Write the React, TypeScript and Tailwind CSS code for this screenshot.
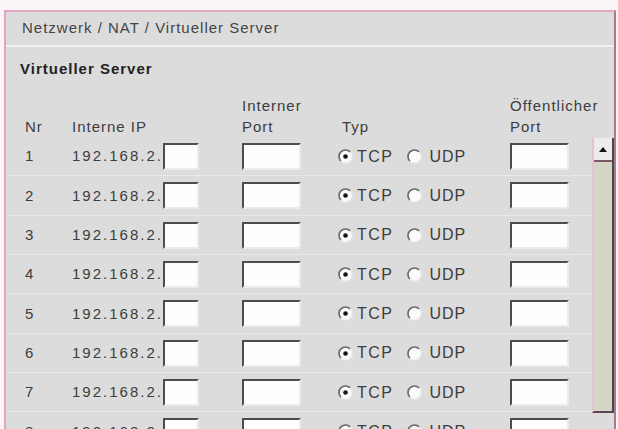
import React from "react";

const rows = [1, 2, 3, 4, 5, 6, 7, 8];

function Radio({ checked }: { checked: boolean }) {
  return (
    <svg width="15" height="15" viewBox="0 0 15 15" className="shrink-0">
      <circle cx="7.5" cy="7.5" r="6.5" fill="#fbfbfb" />
      <path d="M12.1 2.9 A6.5 6.5 0 0 0 2.9 12.1" fill="none" stroke="#6a6a6a" strokeWidth="1.7" />
      <path d="M12.1 2.9 A6.5 6.5 0 0 1 2.9 12.1" fill="none" stroke="#eeeeee" strokeWidth="1.4" />
      {checked && <circle cx="7.5" cy="7.5" r="2.3" fill="#151515" />}
    </svg>
  );
}

function Box({ w }: { w: string }) {
  return (
    <input
      type="text"
      readOnly
      className={`${w} h-[27px] border-2 border-t-[#4d4d4d] border-l-[#4d4d4d] border-r-[#ebebeb] border-b-[#ebebeb] bg-[#fdfdfd] outline-none`}
    />
  );
}

export default function App() {
  return (
    <div className="h-[429px] w-[618px] overflow-hidden bg-[#fbf4f8] pl-[4px] pr-[2px] pt-[10px] font-['Liberation_Sans',Arial,sans-serif] text-[15px] tracking-[1px] text-[#3d3d3d]">
      <div className="min-h-[440px] border-2 border-[#e2a6c0] border-r-[#a87a8e] bg-[#dcdcdc]">
        {/* Breadcrumb */}
        <div className="flex h-[35px] items-center border-b-2 border-[#f0f0f0] pl-[16px] text-[#444]">
          Netzwerk / NAT / Virtueller Server
        </div>

        {/* Title */}
        <div className="pl-[14px] pt-[13px] text-[15px] font-bold leading-[18px] text-[#222]">
          Virtueller Server
        </div>

        {/* Column headers */}
        <div className="mt-[16px] flex h-[43px] items-end pl-[19px] leading-[21px]">
          <div className="w-[47px]">Nr</div>
          <div className="w-[170px]">Interne IP</div>
          <div className="w-[100px]">
            Interner
            <br />
            Port
          </div>
          <div className="w-[168px]">Typ</div>
          <div className="whitespace-nowrap">
            Öffentlicher
            <br />
            Port
          </div>
        </div>

        {/* Rows + scrollbar */}
        <div className="flex items-start">
          <div className="flex-1">
            {rows.map((n) => (
              <div key={n} className="flex h-[39.33px] items-center border-b border-[#e8e8e8] pl-[19px] pt-[1px]">
                <div className="w-[47px]">{n}</div>
                <div className="flex w-[170px] items-center">
                  <span className="tracking-[2px]">192.168.2.</span>
                  <Box w="w-[36px]" />
                </div>
                <div className="w-[96px]">
                  <Box w="w-[59px]" />
                </div>
                <div className="flex w-[172px] items-center text-[16px]">
                  <Radio checked />
                  <span className="ml-[4px] tracking-[1.5px]">TCP</span>
                  <span className="ml-[13px]">
                    <Radio checked={false} />
                  </span>
                  <span className="ml-[8px] tracking-[1px]">UDP</span>
                </div>
                <div>
                  <Box w="w-[59px]" />
                </div>
              </div>
            ))}
          </div>

          {/* Scrollbar */}
          <div className="mt-[1px] flex h-[275px] w-[22px] flex-col border-b-2 border-l-2 border-r-2 border-b-[#5a4450] border-l-[#e6c2d2] border-r-[#4a4a4a]">
            <div className="flex h-[24px] items-center justify-center border-b-2 border-[#7a5868] bg-[#ececec]">
              <svg width="8" height="5" viewBox="0 0 8 5">
                <path d="M0 5 L4 0 L8 5 Z" fill="#111" />
              </svg>
            </div>
            <div className="flex-1 bg-[#d3d6c4]" />
          </div>
        </div>
      </div>
    </div>
  );
}
